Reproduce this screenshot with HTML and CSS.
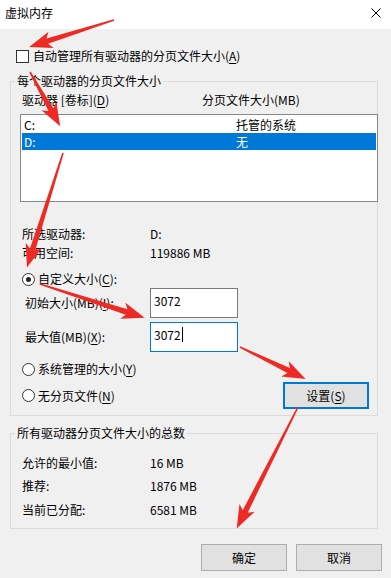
FILE: index.html
```html
<!DOCTYPE html>
<html lang="zh-CN">
<head>
    <meta charset="UTF-8">
    <meta name="viewport" content="width=device-width, initial-scale=1.0">
    <title>虚拟内存</title>
    <link rel="stylesheet" href="styles.css">
</head>
<body>
    <div class="dialog">
        <div class="titlebar">
            <span class="title">虚拟内存</span>
            <svg class="close" width="10" height="10" viewBox="0 0 10 10">
                <path d="M0.5 0.5L9.5 9.5M9.5 0.5L0.5 9.5" stroke="#000" stroke-width="1" fill="none"/>
            </svg>
        </div>

        <div class="content">
            <label class="check-row">
                <span class="checkbox"></span>
                <span>自动管理所有驱动器的分页文件大小(<u>A</u>)</span>
            </label>

            <fieldset class="group group-drives">
                <legend>每个驱动器的分页文件大小</legend>
                <div class="list-head">
                    <span class="head-drive">驱动器 [卷标](<u>D</u>)</span>
                    <span>分页文件大小(MB)</span>
                </div>
                <div class="listbox">
                    <div class="list-row">
                        <span class="cell-drive">C:</span>
                        <span>托管的系统</span>
                    </div>
                    <div class="list-row selected">
                        <span class="cell-drive">D:</span>
                        <span>无</span>
                    </div>
                </div>

                <div class="info-row first">
                    <span class="info-label">所选驱动器:</span>
                    <span>D:</span>
                </div>
                <div class="info-row">
                    <span class="info-label">可用空间:</span>
                    <span>119886 MB</span>
                </div>

                <label class="radio-row custom">
                    <span class="radio checked"></span>
                    <span>自定义大小(<u>C</u>):</span>
                </label>
                <div class="field-row">
                    <span class="field-label">初始大小(MB)(<u>I</u>):</span>
                    <span class="textbox">3072</span>
                </div>
                <div class="field-row">
                    <span class="field-label">最大值(MB)(<u>X</u>):</span>
                    <span class="textbox focused">3072<span class="caret"></span></span>
                </div>

                <label class="radio-row system">
                    <span class="radio"></span>
                    <span>系统管理的大小(<u>Y</u>)</span>
                </label>
                <div class="radio-row nofile">
                    <label class="radio-label">
                        <span class="radio"></span>
                        <span>无分页文件(<u>N</u>)</span>
                    </label>
                    <button class="btn btn-default">设置(<u>S</u>)</button>
                </div>
            </fieldset>

            <fieldset class="group group-total">
                <legend>所有驱动器分页文件大小的总数</legend>
                <div class="info-row">
                    <span class="info-label">允许的最小值:</span>
                    <span>16 MB</span>
                </div>
                <div class="info-row">
                    <span class="info-label">推荐:</span>
                    <span>1876 MB</span>
                </div>
                <div class="info-row">
                    <span class="info-label">当前已分配:</span>
                    <span>6581 MB</span>
                </div>
            </fieldset>

            <div class="actions">
                <button class="btn">确定</button>
                <button class="btn">取消</button>
            </div>
        </div>

        <!-- red annotation arrows drawn over the dialog -->
        <svg class="arrows" width="391" height="578" viewBox="0 0 391 578">
            <g fill="#ee2a24">
                <polygon transform="translate(114 20) rotate(162.4)" points="0,-0.8 70,-2.8 66,-8.5 89,0 66,8.5 70,2.8 0,0.8"/>
                <polygon transform="translate(30 72) rotate(60.9)" points="0,-0.8 43,-2.8 39,-8.5 62,0 39,8.5 43,2.8 0,0.8"/>
                <polygon transform="translate(63 153) rotate(107.5)" points="0,-0.8 101,-2.8 97,-8.5 120,0 97,8.5 101,2.8 0,0.8"/>
                <polygon transform="translate(40 284) rotate(17.9)" points="0,-0.8 91,-2.8 87,-8.5 110,0 87,8.5 91,2.8 0,0.8"/>
                <polygon transform="translate(240 347) rotate(25.9)" points="0,-0.8 54,-2.8 50,-8.5 73,0 50,8.5 54,2.8 0,0.8"/>
                <polygon transform="translate(298 407) rotate(116.8)" points="0,-0.8 117,-2.8 113,-8.5 136,0 113,8.5 117,2.8 0,0.8"/>
            </g>
        </svg>
    </div>
</body>
</html>
```

FILE: styles.css
```css
body {
    margin: 0;
    font-family: "Noto Sans CJK SC", "Noto Sans", sans-serif;
    font-size: 12px;
    line-height: 16px;
    color: black;
    background-color: #f0f0f0;
}
u {
    text-decoration: underline;
    text-underline-offset: 2px;
}
.dialog {
    position: relative;
    width: 391px;
    height: 578px;
    background-color: #f0f0f0;
    overflow: hidden;
}
.titlebar {
    height: 29px;
    box-sizing: border-box;
    padding: 5px 10px 0 5px;
    background-color: white;
    display: flex;
    justify-content: space-between;
    align-items: flex-start;
}
.close {
    margin-top: 3px;
}
.content {
    padding-top: 19px;
}
.check-row {
    display: flex;
    align-items: center;
    gap: 4px;
    margin-left: 16px;
}
.checkbox {
    width: 13px;
    height: 13px;
    box-sizing: border-box;
    border: 1px solid #333;
    background-color: white;
}
.group {
    margin: 0 13px 0 10px;
    padding: 3px 0 6px 9px;
    border: 1px solid #dcdcdc;
    min-width: 0;
}
.group legend {
    padding: 0 2px;
    margin-left: -5px;
    line-height: 16px;
}
.group-drives {
    margin-top: 9px;
}
.group-total {
    margin-top: 9px;
    padding-top: 14px;
    padding-bottom: 10px;
}
.list-head {
    display: flex;
    padding-left: 2px;
}
.head-drive {
    width: 180px;
}
.listbox {
    margin-top: 6px;
    margin-right: -1px;
    height: 88px;
    box-sizing: border-box;
    border: 1px solid #828790;
    padding: 1px;
    background-color: white;
}
.list-row {
    display: flex;
    height: 17px;
    line-height: 17px;
    padding-left: 2px;
}
.list-row.selected {
    background-color: #0078d7;
    color: white;
}
.cell-drive {
    width: 212px;
}
.info-row {
    display: flex;
    padding-left: 2px;
    margin-top: 3px;
}
.info-row.first {
    margin-top: 24px;
}
.group-total .info-row {
    margin-top: 7px;
}
.group-total .info-row:first-of-type {
    margin-top: 0;
}
.group-total .info-row:last-child {
    margin-top: 8px;
}
.info-label {
    width: 128px;
}
.radio-row,
.radio-label {
    display: flex;
    align-items: center;
    gap: 3px;
}
.radio-row {
    padding-left: 2px;
}
.radio-row.custom {
    margin-top: 10px;
}
.radio-row.system {
    margin-top: 9px;
}
.radio-row.nofile {
    margin-top: 5px;
    justify-content: space-between;
    margin-right: 8px;
}
.radio {
    width: 13px;
    height: 13px;
    box-sizing: border-box;
    border: 1px solid #333;
    border-radius: 50%;
    background-color: white;
    display: flex;
    align-items: center;
    justify-content: center;
}
.radio.checked::after {
    content: "";
    width: 5px;
    height: 5px;
    border-radius: 50%;
    background-color: #222;
}
.field-row {
    display: flex;
    align-items: center;
    margin-top: 4px;
}
.radio-row.custom + .field-row {
    margin-top: 1px;
}
.field-label {
    width: 130px;
    box-sizing: border-box;
    padding-left: 5px;
}
.textbox {
    width: 88px;
    height: 30px;
    box-sizing: border-box;
    border: 1px solid #7a7a7a;
    background-color: white;
    padding: 4px 0 0 3px;
    display: flex;
    align-items: flex-start;
}
.textbox.focused {
    border-color: #0078d7;
}
.caret {
    display: inline-block;
    width: 1px;
    height: 15px;
    margin-left: 1px;
    background-color: black;
}
.btn {
    width: 86px;
    height: 27px;
    box-sizing: border-box;
    border: 1px solid #adadad;
    background-color: #e1e1e1;
    font-family: inherit;
    font-size: 12px;
    color: black;
    padding: 0;
}
.btn-default {
    border: 2px solid #0078d7;
}
.actions {
    display: flex;
    justify-content: flex-end;
    gap: 9px;
    margin-top: 15px;
    padding-right: 9px;
}
.arrows {
    position: absolute;
    top: 0;
    left: 0;
    pointer-events: none;
}
```
